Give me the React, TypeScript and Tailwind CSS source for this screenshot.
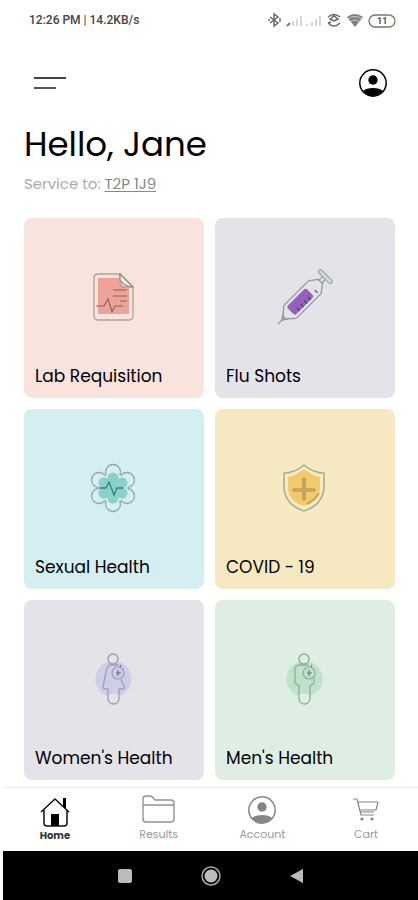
import type { ReactNode } from "react";

function LabIcon() {
  return (
    <svg width="90" height="90" viewBox="0 0 90 90" fill="none" aria-hidden="true">
      <path d="M29 28H50Q51 37 60 38V64H29Z" fill="#eea398" />
      <path d="M51 24H29Q25 24 25 28V66Q25 70 29 70H60Q64 70 64 66V37L51 24V33Q51 37 55 37H64" fill="none" stroke="#a9a49b" strokeWidth="1.3" strokeLinejoin="round" />
      <path d="M51 24V30Q54 36 64 37Z" fill="#f8e9e2" stroke="#8d8980" strokeWidth="1.2" strokeLinejoin="round" />
      <path d="M44 40H58M44 46H58M51 51H58M27 56H35L39 49L43 62L46 56H54" stroke="#84645c" strokeWidth="1.1" />
    </svg>
  );
}

function SyringeIcon() {
  return (
    <svg width="90" height="90" viewBox="0 0 90 90" fill="none" aria-hidden="true">
      <g transform="translate(18 74) rotate(45)">
        <rect x="-6" y="-45" width="12" height="27" rx="2" fill="#9560ba" />
        <path d="M2 -40H6M2 -35H6M2 -30H6M2 -25H6M2 -50H6" stroke="#4d3b76" strokeWidth="1.1" />
        <path d="M-3 -60H3L9 -52V-18Q9 -16 7 -15L2 -9H-2L-7 -15Q-9 -16 -9 -18V-52Z" stroke="#8f9b9f" strokeWidth="1.3" strokeLinejoin="round" />
        <path d="M-2 -60V-65M2 -60V-65M0 -9V0M-4 -12L0 -5L4 -12" stroke="#8f9b9f" strokeWidth="1.2" />
        <rect x="-9" y="-69" width="18" height="4" rx="2" fill="#d5d8db" stroke="#8f9b9f" />
      </g>
    </svg>
  );
}

function FlowerIcon() {
  return (
    <svg width="90" height="90" viewBox="0 0 90 90" fill="none" aria-hidden="true">
      <g stroke="#8caab1" strokeWidth="1.3">
        <circle cx="44" cy="31" r="7.500" /><circle cx="58" cy="39" r="7.500" />
        <circle cx="58" cy="55" r="7.500" /><circle cx="44" cy="63" r="7.500" />
        <circle cx="30" cy="55" r="7.500" /><circle cx="30" cy="39" r="7.500" />
      </g>
      <circle cx="44" cy="47" r="14.500" fill="#d5eef2" />
      <g fill="#8ad2c9">
        <circle cx="44" cy="37" r="5.500" /><circle cx="53" cy="42" r="5.500" />
        <circle cx="53" cy="52" r="5.500" /><circle cx="44" cy="57" r="5.500" />
        <circle cx="35" cy="52" r="5.500" /><circle cx="35" cy="42" r="5.500" />
        <circle cx="44" cy="47" r="10" />
      </g>
      <path d="M30 47H37L40 41L45 54L48 47H54" stroke="#397e86" strokeWidth="1.3" />
    </svg>
  );
}

function ShieldIcon() {
  return (
    <svg width="90" height="90" viewBox="0 0 90 90" fill="none" aria-hidden="true">
      <path d="M44 24C38 29 31 32 24 32V45C24 58 32 66 44 70C56 66 64 58 64 45V32C57 32 50 29 44 24Z" stroke="#a7ab98" strokeWidth="1.5" strokeLinejoin="round" />
      <path d="M44 28C39 32 34 35 28 36V46C28 56 34 62 44 65C54 62 60 56 60 46V36C54 35 49 32 44 28Z" fill="#f2ca6e" />
      <path d="M43 38Q44 37 45 38V48H54Q56 49 54 50H45V58Q44 60 43 58V50H34Q32 49 34 48H43Z" stroke="#9f884f" strokeWidth="1.1" />
      <path d="M47 63Q55 59 59 52" stroke="#b9954d" strokeWidth="1.5" />
    </svg>
  );
}

function BodyIcon({ woman }: { woman: boolean }) {
  const stroke = woman ? "#9a9eb7" : "#8fad9f";
  return (
    <svg width="90" height="90" viewBox="0 -4 90 90" fill="none" aria-hidden="true">
      <circle cx="44.500" cy="43" r="18" fill={woman ? "#cfcee9" : "#c1e1cb"} />
      <circle cx="44" cy="23" r="5" fill={woman ? "#e4e3e9" : "#dfeee4"} stroke={stroke} strokeWidth="1.4" />
      <path d="M39 58V62C39 70 50 70 50 62V58Z" fill={woman ? "#e4e3e9" : "#dfeee4"} />
      <path
        d={woman ? "M49 29H41Q38 30 37 36L34 51Q34 53 39 53V62C39 70 50 70 50 62V53H54Q56 52 55 50L52 44" : "M48 29H38Q35 30 35 33V47L39 50V62C39 70 50 70 50 62V50L54 47V42"}
        stroke={stroke} strokeWidth="1.3" strokeLinejoin="round" strokeLinecap="round"
      />
      <circle cx="49" cy="37" r="6" fill={woman ? "#cfcee9" : "#c1e1cb"} stroke={stroke} strokeWidth="1.2" />
      <path d="M47 37H52M49 34V40M51 31L52 29" stroke={woman ? "#656987" : "#57866e"} strokeWidth="1.1" />
    </svg>
  );
}

function UserIcon({ color, size }: { color: string; size: number }) {
  return (
    <svg width={size} height={size} viewBox="0 0 30 30" fill="none" aria-hidden="true">
      <circle cx="15" cy="15" r="13.200" stroke={color} strokeWidth="1.5" />
      <circle cx="15" cy="12" r="4.700" fill={color} />
      <path d="M5 23Q8 20 15 20T25 23Q21 28 15 28T5 23Z" fill={color} />
    </svg>
  );
}

function HomeIcon() {
  return (
    <svg width="32" height="32" viewBox="0 0 32 32" fill="none" aria-hidden="true">
      <path d="M2 16L16 3L30 16M5 14V27Q5 30 8 30H25Q28 30 28 27V14" stroke="#111" strokeWidth="1.5" />
      <path d="M24 2H27V13L24 10ZM12 18H20V30H12Z" fill="#000" />
    </svg>
  );
}

function FolderIcon() {
  return (
    <svg width="34" height="30" viewBox="0 0 34 30" fill="none" stroke="#929292" strokeWidth="1.400" strokeLinejoin="round" aria-hidden="true">
      <path d="M1 10V4Q1 1 4 1H8Q10 1 13 5H29Q32 5 32 8V24Q32 27 29 27H4Q1 27 1 24V10H32" />
    </svg>
  );
}

function CartIcon() {
  return (
    <svg width="28" height="26" viewBox="0 0 28 26" fill="none" stroke="#858585" strokeWidth="1.200" strokeLinejoin="round" aria-hidden="true">
      <path d="M1 2H5L9 18H22M6 5H26L24 13H8M8 15H22" />
      <circle cx="10" cy="22" r="1" fill="#858585" />
      <circle cx="20" cy="22" r="1" fill="#858585" />
    </svg>
  );
}

function StatusIcons() {
  return (
    <svg width="130" height="18" viewBox="0 0 130 18" fill="none" aria-label="Bluetooth, signal, Wi-Fi, battery 11" role="img">
      <path d="M4 6L12 12L8 15V3L12 6L4 12M3 8V10M14 7V11" stroke="#666" strokeWidth="1.4" />
      <path d="M21 15L24 12" stroke="#777" strokeWidth="2" />
      <path d="M27 10V15M31 8V15M35 5V15M41 13V15M46 11V15M50 8V15M54 5V15" stroke="#d6d6d6" strokeWidth="2" />
      <path d="M62 6Q68 1 74 6M64 8L68 5L72 8L68 10ZM62 12Q68 18 74 12M62 12L65 11" stroke="#666" strokeWidth="1.500" />
      <path d="M81 6Q89 0 97 6L89 16Z" fill="#808080" />
      <path d="M82 8Q89 3 96 8M84 11Q89 7 94 11" stroke="#ddd" strokeWidth="0.800" />
      <rect x="103" y="4" width="26" height="12" rx="6" stroke="#777" strokeWidth="1.300" />
      <text x="111" y="13" fontSize="9" fontWeight="700" fill="#555" fontFamily="Roboto, sans-serif">11</text>
    </svg>
  );
}

const services: { title: string; tone: string; icon: ReactNode }[] = [
  { title: "Lab Requisition", tone: "bg-[#f8e4dd]", icon: <LabIcon /> },
  { title: "Flu Shots", tone: "bg-[#e4e3e9]", icon: <SyringeIcon /> },
  { title: "Sexual Health", tone: "bg-[#d5eef2]", icon: <FlowerIcon /> },
  { title: "COVID - 19", tone: "bg-[#f6e8c1]", icon: <ShieldIcon /> },
  { title: "Women's Health", tone: "bg-[#e4e3e9]", icon: <BodyIcon woman /> },
  { title: "Men's Health", tone: "bg-[#dfeee3]", icon: <BodyIcon woman={false} /> },
];

const tabs: { label: string; icon: ReactNode; style: string }[] = [
  { label: "Home", icon: <HomeIcon />, style: "text-[10px] font-bold text-[#333]" },
  { label: "Results", icon: <FolderIcon />, style: "pb-1 text-[11px] text-[#999]" },
  { label: "Account", icon: <UserIcon color="#858585" size={30} />, style: "pb-1 text-[11px] text-[#999]" },
  { label: "Cart", icon: <CartIcon />, style: "pb-1 text-[11px] text-[#999]" },
];

export default function App() {
  return (
    <div className="flex min-h-screen flex-col bg-white pl-[3px] font-['Poppins','Inter',sans-serif] text-black">
      <div className="flex h-10 items-center justify-between pr-[22px] pl-[26px]">
        <span className="font-['Roboto',sans-serif] text-xs font-medium text-[#444]">12:26 PM | 14.2KB/s</span>
        <StatusIcons />
      </div>

      <header className="flex h-[86px] items-center justify-between pr-[30px] pl-[31px]">
        <button type="button" aria-label="Open menu" className="flex h-8 w-8 flex-col items-start justify-center gap-2">
          <span className="h-0.5 w-full bg-[#444]" />
          <span className="h-0.5 w-[22px] bg-[#555]" />
        </button>
        <button type="button" aria-label="Profile"><UserIcon color="#000" size={30} /></button>
      </header>

      <main className="flex-1 pr-[23px] pl-[21px]">
        <h1 className="text-[34px] leading-9">Hello, Jane</h1>
        <p className="mt-3 text-[15px] leading-5 text-[#aaa]">
          Service to: <a href="#location" className="text-[#888] underline underline-offset-2">T2P 1J9</a>
        </p>
        <div className="mt-6 grid grid-cols-2 gap-[11px]">
          {services.map(({ title, tone, icon }) => (
            <button key={title} type="button" className={`flex aspect-square flex-col items-start rounded-lg px-[11px] pb-3 text-left ${tone}`}>
              <span className="flex w-full flex-1 items-end justify-center pb-[26px]">{icon}</span>
              <span className="text-[17px] leading-5 whitespace-nowrap">{title}</span>
            </button>
          ))}
        </div>
      </main>

      <nav aria-label="Main" className="mt-[7px] grid h-16 grid-cols-4 border-t border-[#eee]">
        {tabs.map(({ label, icon, style }) => (
          <button key={label} type="button" className={`flex flex-col items-center justify-center leading-4 ${style}`}>
            <span className="flex h-8 items-center justify-center">{icon}</span>
            {label}
          </button>
        ))}
      </nav>

      <div className="flex h-[49px] items-center justify-center gap-[66px] bg-black">
        <button type="button" aria-label="Recent apps" className="flex w-5 justify-center"><span className="h-3.5 w-3.5 rounded-xs bg-[#bbb]" /></button>
        <button type="button" aria-label="Home screen">
          <svg width="20" height="20" viewBox="0 0 20 20" aria-hidden="true"><circle cx="10" cy="10" r="9" fill="none" stroke="#aaa" strokeWidth="1.500" /><circle cx="10" cy="10" r="6.500" fill="#bbb" /></svg>
        </button>
        <button type="button" aria-label="Back" className="flex w-5 justify-center">
          <svg width="14" height="16" viewBox="0 0 14 16" aria-hidden="true"><path d="M0 8L13 1V15Z" fill="#bbb" /></svg>
        </button>
      </div>
    </div>
  );
}
